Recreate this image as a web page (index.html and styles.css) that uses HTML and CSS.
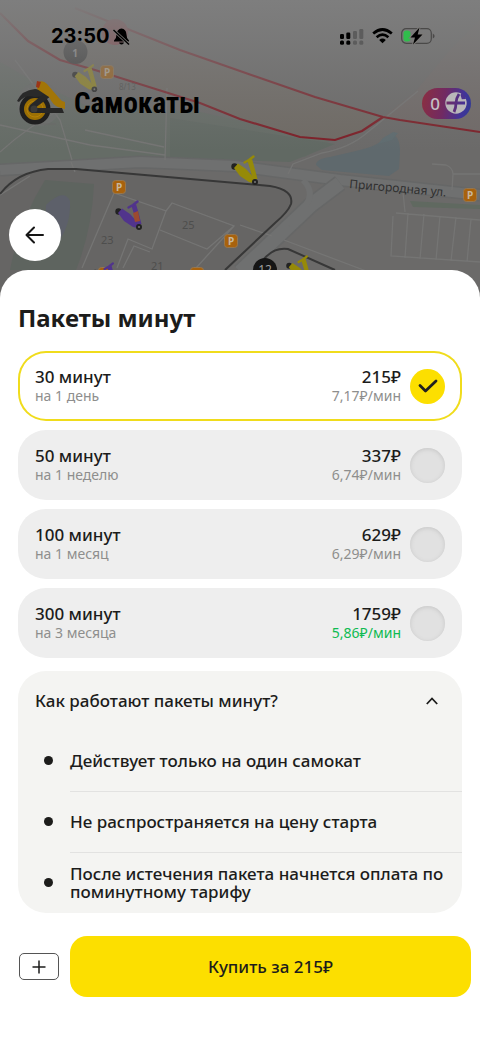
FILE: index.html
```html
<!DOCTYPE html>
<html lang="ru">
<head>
<meta charset="utf-8">
<meta name="viewport" content="width=device-width, initial-scale=1">
<title>Самокаты</title>
<link rel="stylesheet" href="styles.css">
</head>
<body>
<div class="screen">
  <svg class="map" viewBox="0 0 480 310" preserveAspectRatio="xMidYMin slice" aria-hidden="true">
    <defs>
      <linearGradient id="fade" x1="0" y1="0" x2="0" y2="1">
        <stop offset="0" stop-color="#7e7e7e"/>
        <stop offset="0.25" stop-color="#7e7e7e" stop-opacity="0.75"/>
        <stop offset="1" stop-color="#7a7a7a" stop-opacity="0"/>
      </linearGradient>
      <symbol id="parking" viewBox="0 0 14 14">
        <rect x="0.5" y="0.5" width="13" height="13" rx="3" fill="#a8620d" stroke="#96774f"/>
        <text x="7" y="10.5" text-anchor="middle" class="map-parking">P</text>
      </symbol>
      <symbol id="scooter" viewBox="0 0 30 32">
        <circle cx="4.500" cy="12.500" r="3.200" fill="#222"/>
        <path d="M4 14 L8 9.500 L16 15 L25 25 L24 29 L19 28 L10 22 Z" fill="currentColor"/>
        <path d="M17.500 7 L22 5 L24 12 L27.500 25 L23 26 L20 15 Z" fill="currentColor"/>
        <path d="M14.500 8.500 L19 6 L23.500 2.500" fill="none" stroke="currentColor" stroke-width="2.500" stroke-linecap="round"/>
        <circle cx="25" cy="28" r="3" fill="#222"/>
        <circle cx="25" cy="28" r="1" fill="#777"/>
      </symbol>
    </defs>
    <rect width="480" height="310" fill="#6b6a69"/>
    <path d="M0 62 L35 82 L85 105 L200 112 L330 141 L305 157 L240 152 L160 158 L0 166 Z" fill="#656c66"/>
    <path d="M170 118 L335 144 L290 162 L170 158 Z" fill="#616963"/>
    <path d="M0 13 L28 41 L60 60 L95 70 L200 103 L240 119 L300 137 L335 140 L362 131 L383 117 L315 97 L240 71 L130 30 L75 8 L0 0 Z" fill="#6f6a64"/>
    <path d="M383 117 L415 92 L450 50 L480 20 L480 132 L400 120 Z" fill="#706967"/>
    <path d="M316 165 Q316 159 330 157 L360 150 Q374 147 387 138 Q399 129 400 151 L399 169 L389 176 L322 170 Z" fill="#5f696d"/>
    <path d="M378 144 L383 138 L393 132 L398 133 L392 140 Z" fill="#5f6c70"/>
    <path d="M0 170 L140 162 L235 166 L340 180 L480 195" fill="none" stroke="#666767" stroke-width="13"/>
    <path d="M0 170 L140 162 L235 166 L340 180 L480 195" fill="none" stroke="#6f7070" stroke-width="10"/>
    <path d="M340 183 L311 205 L240 272" fill="none" stroke="#666767" stroke-width="17"/>
    <path d="M340 183 L311 205 L240 272" fill="none" stroke="#6f7070" stroke-width="14"/>
    <path d="M303 180 Q315 192 306 205 L288 225" fill="none" stroke="#6f7070" stroke-width="6"/>
    <path d="M0 194 Q17 172 48 169 L76 169 L270 186 Q294 190 291 204 Q288 212 275 223 L225 272 L0 300 Z" fill="#666564"/>
    <path d="M45 180 L94 184 Q92 230 76 270 L10 270 Q20 220 45 180 Z" fill="#5e645f"/>
    <path d="M46 205 Q64 188 70 201 Q71 225 58 242 L45 251 Z" fill="#5d606a"/>
    <g fill="none" stroke="#757574" stroke-width="1.3">
      <path d="M0 125 L90 145 L165 155 M15 60 L60 120 L72 160 M28 88 L44 118 M167 88 L165 160 M85 130 L164 147 M0 152 Q30 125 60 110 M0 195 L30 176 M75 172 L71 162"/>
      <path d="M82 268 L114 193 L166 211 L152 249 L128 239 L117 268 M166 211 L172 203 L234 226 L207 249 L160 230 M123 268 L134 246 L150 252 M234 226 L196 268"/>
      <path d="M288 174 L293 164 L322 153 Q350 148 368 132 L418 91 M432 164 L446 165 Q453 168 453 174 L452 190 M453 174 L480 174 M403 192 L405 212"/>
      <path d="M284 240 L390 280 M240 225 L272 236 M396 213 L480 220 M393 216 L391 256 L480 262 M408 213 L405 258 M424 214 L420 259 M440 216 L436 260 M456 217 L451 261 M471 219 L467 262 M260 265 L300 280"/>
    </g>
    <path d="M410 201 L480 205 L480 209 L413 207 Z" fill="#606960"/>
    <path d="M0 194 Q17 172 48 169 L76 169 L270 186 Q294 190 291 204 Q288 212 275 223 L225 270" fill="none" stroke="#373737" stroke-width="2"/>
    <path d="M264 259 Q274 247 288 249 L335 270" fill="none" stroke="#373737" stroke-width="2"/>
    <g fill="none" stroke="#7e1c25" stroke-width="2.2">
      <path d="M75 8 L130 30 L180 50 L240 71 L315 97 L383 117 L400 120 L480 132"/>
      <path d="M0 13 L28 41 L60 60 L95 70 L200 103 L240 119 L300 137 L335 140 L362 131 L383 117"/>
    </g>
    <circle cx="115" cy="32" r="13" fill="#92353f"/>
    <g class="map-house">
      <text x="101" y="244">23</text>
      <text x="182" y="229">25</text>
      <text x="151" y="270">21</text>
      <text x="119" y="90" class="map-small">8/13</text>
    </g>
    <text x="349" y="188" transform="rotate(5 349 188)" class="map-street">Пригородная ул.</text>
    <use href="#parking" x="100" y="65" width="14" height="14"/>
    <use href="#parking" x="112" y="180" width="14" height="14"/>
    <use href="#parking" x="224" y="234" width="14" height="14"/>
    <use href="#parking" x="463" y="188" width="14" height="14"/>
    <use href="#parking" x="98" y="267" width="14" height="14"/>
    <use href="#parking" x="190" y="267" width="14" height="14"/>
    <use href="#scooter" x="70" y="63" width="30" height="30" color="#9a8c1c"/>
    <use href="#scooter" x="114" y="199" width="30" height="32" color="#51348c"/>
    <path d="M133 213 L138 211 L140 221 L135 222 Z" fill="#9c4a30"/>
    <use href="#scooter" x="230" y="154" width="30" height="32" color="#968a08"/>
    <use href="#scooter" x="285" y="254" width="28" height="30" color="#968a08"/>
    <use href="#scooter" x="91" y="261" width="28" height="30" color="#51348c"/>
    <circle cx="75.500" cy="52" r="12" fill="#303030"/>
    <text x="75" y="57" class="map-count map-count-first">1</text>
    <circle cx="265" cy="270" r="12" fill="#151515"/>
    <text x="265" y="274" class="map-count">12</text>
    <rect width="480" height="150" fill="url(#fade)"/>
  </svg>

  <header class="top">
    <div class="status">
      <div class="status-time">
        <span>23:50</span>
        <svg width="19" height="19" viewBox="0 0 19 19" aria-label="Без звука">
          <path d="M9.500 1.500 Q5 2 4.600 7 Q4.600 11 2 13.500 V14.500 H17 V13.500 Q14.400 11 14.400 7 Q14 2 9.500 1.500 Z M7 15.500 H12 Q11.500 17.500 9.500 17.500 Q7.500 17.500 7 15.500 Z"/>
          <path d="M1.500 3 L17 17.500" stroke="#7c7a78" stroke-width="3"/>
          <path d="M1.500 3 L17 17.500" stroke="#000" stroke-width="1.400"/>
        </svg>
      </div>
      <div class="status-icons">
        <svg width="25" height="17" viewBox="0 0 25 17" aria-label="Сеть">
          <g><rect x="1" y="6" width="4" height="5" rx="1.300"/><rect x="7.300" y="4.500" width="4" height="6.500" rx="1.300"/><rect x="1" y="12.500" width="4" height="4.200" rx="1.500"/><rect x="7.300" y="12.500" width="4" height="4.200" rx="1.500"/></g>
          <g fill="#5c5c5c"><rect x="14" y="3" width="4" height="8" rx="1.300"/><rect x="20.300" y="1" width="4" height="10" rx="1.300"/><rect x="14" y="12.500" width="4" height="4.200" rx="1.500"/><rect x="20.300" y="12.500" width="4" height="4.200" rx="1.500"/></g>
        </svg>
        <svg width="21" height="16" viewBox="0 0 21 16" aria-label="Wi-Fi">
          <g fill="none" stroke="#000" stroke-width="2.700"><path d="M1.200 5.500 Q10.500 -2.500 19.800 5.500"/><path d="M4.600 9.200 Q10.500 4.200 16.400 9.200"/></g>
          <path d="M7.200 12 Q10.500 9.200 13.800 12 L10.500 15.300 Z"/>
        </svg>
        <svg width="34" height="18" viewBox="0 0 34 18" aria-label="Батарея">
          <rect x="0.700" y="1.700" width="29.600" height="14.600" rx="4.500" fill="none" stroke="#4a4948" stroke-width="1.200"/>
          <rect x="2.500" y="3.500" width="7" height="11" rx="3" fill="#30bd4c"/>
          <path d="M31.800 6.500 Q33.600 7.500 33.600 9 Q33.600 10.500 31.800 11.500 Z" fill="#4a4948"/>
          <path d="M18.500 0.500 L9.500 10.500 H14 L12 17.500 L21.500 7.500 H16.700 Z" stroke="#7c7a78" stroke-width="2" paint-order="stroke"/>
        </svg>
      </div>
    </div>

    <div class="brand-row">
      <div class="brand">
        <svg width="49" height="48" viewBox="0 0 49 48" aria-hidden="true">
          <circle cx="22" cy="25" r="22" fill="#727271" opacity="0.6"/>
          <path d="M15 45 H39" stroke="#6a6a69"/>
          <circle cx="18" cy="30" r="15.500" fill="#202020"/>
          <circle cx="18" cy="30" r="11" fill="#9c7004"/>
          <circle cx="18" cy="30" r="8" fill="none" stroke="#b58107" stroke-width="1"/>
          <path d="M0 22 Q5 11 18 10 L26 11 L31 17 L18 18 Q8 15 2 23 Z" fill="#2a2a2a"/>
          <path d="M13 26 L30 12 L34 17 L18 29 H45 L47 34 H15 Q9 32 13 26 Z" fill="#272727"/>
          <circle cx="17" cy="30" r="3.500" fill="#3b3a38"/>
          <path d="M22 3 Q26 1 30 5 L42 19 Q44 22 48 23 V30 L41 28 Q36 26 32 18 L20 10 Z" fill="#a27507"/>
          <path d="M20 2 L24 3 L22 9 L19 8 Z" fill="#9b3517"/>
        </svg>
        <h1>Самокаты</h1>
      </div>
      <button class="plus-badge" type="button" aria-label="Баллы Плюса: 0">
        <span>0</span>
        <svg width="22" height="22" viewBox="0 0 22 22" aria-hidden="true">
          <defs><linearGradient id="cross" gradientUnits="userSpaceOnUse" x1="0" y1="0" x2="22" y2="0"><stop stop-color="#722a63"/><stop offset="1" stop-color="#40339a"/></linearGradient></defs>
          <circle cx="11" cy="11" r="10.700" fill="#b9b7ba"/>
          <path d="M14 2 Q11.300 6 11 11 Q11 16 9 20 M1.500 11 H20" fill="none" stroke="url(#cross)" stroke-width="2.800"/>
          <path d="M15.500 3 L16.800 7.300 L21 7 Q20 3 16.500 1 Z" fill="#4a338f"/>
        </svg>
      </button>
    </div>

    <button class="back" type="button" aria-label="Назад">
      <svg width="20" height="18" viewBox="0 0 20 18" fill="none" stroke="#161616" stroke-width="2" stroke-linecap="round" stroke-linejoin="round"><path d="M18 9 H2 M9 1.500 L1.500 9 L9 16.500"/></svg>
    </button>
  </header>

  <main class="sheet">
    <form class="plans">
      <h2>Пакеты минут</h2>
      <label class="plan">
        <span class="plan-name">30 минут<small>на 1 день</small></span>
        <span class="plan-price">215₽<small>7,17₽/мин</small></span>
        <input type="radio" name="plan" checked>
      </label>
      <label class="plan">
        <span class="plan-name">50 минут<small>на 1 неделю</small></span>
        <span class="plan-price">337₽<small>6,74₽/мин</small></span>
        <input type="radio" name="plan">
      </label>
      <label class="plan">
        <span class="plan-name">100 минут<small>на 1 месяц</small></span>
        <span class="plan-price">629₽<small>6,29₽/мин</small></span>
        <input type="radio" name="plan">
      </label>
      <label class="plan">
        <span class="plan-name">300 минут<small>на 3 месяца</small></span>
        <span class="plan-price">1759₽<small class="good">5,86₽/мин</small></span>
        <input type="radio" name="plan">
      </label>
    </form>

    <section class="faq">
      <button class="faq-toggle" type="button" aria-expanded="true">
        <span>Как работают пакеты минут?</span>
        <svg width="12" height="8" viewBox="0 0 12 8" fill="none" stroke="#1c1c1b" stroke-width="1.800"><path d="M0.800 7 L6 1.500 L11.200 7"/></svg>
      </button>
      <ul>
        <li><span>Действует только на один самокат</span></li>
        <li><span>Не распространяется на цену старта</span></li>
        <li><span>После истечения пакета начнется оплата по поминутному тарифу</span></li>
      </ul>
    </section>

    <footer class="actions">
      <button class="add" type="button" aria-label="Добавить способ оплаты">
        <svg width="14" height="14" viewBox="0 0 14 14" stroke="#1c1c1b" stroke-width="1.500"><path d="M7 0.500 V13.500 M0.500 7 H13.500"/></svg>
      </button>
      <button class="buy" type="button">Купить за 215₽</button>
    </footer>
  </main>
</div>
</body>
</html>
```

FILE: styles.css
```css
* {
  box-sizing: border-box;
}

body {
  margin: 0;
  background: #fff;
  color: #1c1c1b;
  font-family: "Noto Sans", sans-serif;
}

button {
  margin: 0;
  padding: 0;
  border: 0;
  color: inherit;
  font: inherit;
  cursor: pointer;
}

svg {
  display: block;
  flex: none;
}

h1,
h2 {
  margin: 0;
}

.screen {
  position: relative;
  display: flex;
  flex-direction: column;
  min-height: 100vh;
}

/* Map backdrop */
.map {
  position: absolute;
  top: 0;
  left: 0;
  width: 100%;
  height: 310px;
}

.map-parking {
  font-size: 10px;
  font-weight: 700;
  fill: #c9b79e;
}

.map-house {
  font-size: 11px;
  fill: #4e4e4d;
}

.map-small {
  font-size: 8px;
}

.map-street {
  font-size: 12px;
  fill: #2f2f2f;
}

.map-count {
  font-size: 12px;
  text-anchor: middle;
  fill: #a0a0a0;
}

.map-count-first {
  font-size: 10px;
  font-weight: 700;
}

/* Header */
.top {
  position: relative;
  display: flex;
  flex-direction: column;
  padding: 24px 9px 9px;
}

.status {
  display: flex;
  align-items: center;
  justify-content: space-between;
  height: 24px;
  padding: 0 36px 0 42px;
}

.status-time {
  display: flex;
  align-items: center;
  gap: 3px;
  color: #000;
  font: 700 20px/20px Inter, sans-serif;
}

.status-icons {
  display: flex;
  align-items: center;
  gap: 8px;
}

.brand-row {
  display: flex;
  align-items: center;
  justify-content: space-between;
  margin-top: 31px;
  padding-left: 8px;
}

.brand {
  display: flex;
  align-items: center;
  gap: 8px;
}

.brand h1 {
  color: #000;
  font: 700 29px/30px "Liberation Sans Narrow", "Roboto Condensed", "Noto Sans", sans-serif;
}

.plus-badge {
  display: flex;
  align-items: center;
  gap: 5px;
  height: 31px;
  padding: 0 4px 0 8px;
  border-radius: 16px;
  background: linear-gradient(100deg, #8c2f40, #712a62 45%, #41349a 80%, #313d91);
  color: #c4bfc4;
  font-size: 17px;
  font-weight: 500;
}

.back {
  display: grid;
  place-items: center;
  width: 52px;
  height: 52px;
  margin-top: 82px;
  border-radius: 50%;
  background: #fff;
}

/* Bottom sheet */
.sheet {
  position: relative;
  flex: 1;
  border-radius: 28px 28px 0 0;
  background: #fff;
}

.plans {
  display: flex;
  flex-direction: column;
  gap: 9px;
  padding: 31px 18px 13px;
}

.plans h2 {
  margin-bottom: 7px;
  font-size: 24px;
  font-weight: 700;
  line-height: 34px;
}

.plan {
  display: flex;
  align-items: center;
  gap: 9px;
  height: 70px;
  padding: 0 17px;
  border-radius: 28px;
  background: #eee;
  cursor: pointer;
}

.plan:has(input:checked) {
  background: #fff;
  box-shadow: inset 0 0 0 2px #f0dc1c;
}

.plan-name,
.plan-price {
  display: flex;
  flex-direction: column;
  font-size: 17px;
  font-weight: 500;
  line-height: 20px;
}

.plan-name {
  flex: 1;
}

.plan-price {
  align-items: flex-end;
}

.plan small {
  color: #8e8e8d;
  font-size: 14px;
  font-weight: 400;
  line-height: 18px;
}

.plan .good {
  color: #0fbb52;
}

.plan input {
  appearance: none;
  width: 35px;
  height: 35px;
  margin: 0;
  border-radius: 50%;
  background: #e1e1e1;
  box-shadow: inset 0 1px 4px #c6c6c6;
}

.plan input:checked {
  background: #fcdf00 url("data:image/svg+xml,%3Csvg xmlns='http://www.w3.org/2000/svg' width='20' height='14' fill='none' stroke='%2321201f' stroke-width='2.800' stroke-linecap='round' stroke-linejoin='round'%3E%3Cpath d='M2 6.500 L7.500 12 L18 2'/%3E%3C/svg%3E") center no-repeat;
  box-shadow: none;
}

/* FAQ */
.faq {
  margin: 0 18px;
  border-radius: 28px;
  background: #f4f4f2;
  font-size: 17px;
  font-weight: 500;
  line-height: 18px;
}

.faq-toggle {
  display: flex;
  align-items: center;
  justify-content: space-between;
  width: 100%;
  height: 59px;
  padding: 0 24px 0 17px;
  background: none;
  text-align: left;
}

.faq ul {
  margin: 0;
  padding: 0;
  list-style: none;
}

.faq li {
  display: flex;
  align-items: center;
  gap: 17px;
  padding-left: 26px;
}

.faq li::before {
  content: "";
  flex: none;
  width: 9px;
  height: 9px;
  border-radius: 50%;
  background: #1c1c1b;
}

.faq li span {
  display: flex;
  flex: 1;
  align-items: center;
  min-height: 61px;
  padding-right: 17px;
}

.faq li + li span {
  border-top: 1px solid #e2e2e1;
}

/* Purchase bar */
.actions {
  display: flex;
  align-items: center;
  gap: 11px;
  padding: 23px 9px 24px 19px;
}

.add {
  display: grid;
  place-items: center;
  width: 40px;
  height: 27px;
  border: 1px solid #555;
  border-radius: 5px;
  background: #fff;
}

.buy {
  flex: 1;
  height: 61px;
  border-radius: 17px;
  background: #fcdf00;
  font-size: 17px;
  font-weight: 500;
}
```
